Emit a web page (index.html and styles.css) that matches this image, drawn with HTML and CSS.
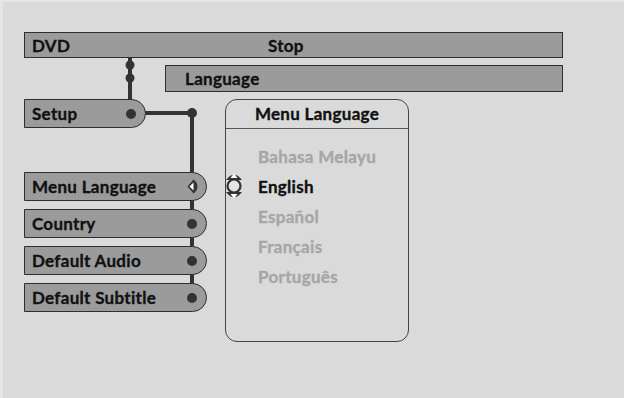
FILE: index.html
```html
<!DOCTYPE html>
<html lang="en">
<head>
  <meta charset="UTF-8" />
  <title>DVD Setup - Menu Language</title>
  <link rel="stylesheet" href="styles.css">
</head>
<body>

  <div class="screen">
    <!-- connector wires, drawn behind the menu pills -->
    <svg class="wires" width="624" height="398" viewBox="0 0 624 398">
      <g fill="#333" stroke="#333">
        <line x1="130" y1="58" x2="130" y2="100" stroke-width="4" />
        <circle cx="130" cy="65" r="4.5" stroke="none" />
        <circle cx="130" cy="78" r="4.5" stroke="none" />
        <line x1="145" y1="113" x2="192" y2="113" stroke-width="4" />
        <circle cx="192" cy="113" r="5" stroke="none" />
        <line x1="192" y1="113" x2="192" y2="300" stroke-width="4" />
      </g>
    </svg>

    <div class="bar bar-top">
      <span class="bar-label">DVD</span>
      <span>Stop</span>
    </div>
    <div class="bar bar-sub">Language</div>

    <div class="main">
      <div class="menu">
        <div class="pill pill-setup">Setup<i class="dot"></i></div>
        <div class="items">
          <div class="pill">Menu Language
            <svg class="arrow" width="11" height="15" viewBox="0 0 11 15">
              <path d="M0.5,7.5 L6.5,0.5 Q10.5,3.5 10.5,7.5 Q10.5,11.5 6.5,14.5 Z" fill="#333" />
              <path d="M2.5,7.5 L6.5,3.5 L6.5,11.5 Z" fill="#fff" />
            </svg>
          </div>
          <div class="pill">Country<i class="dot"></i></div>
          <div class="pill">Default Audio<i class="dot"></i></div>
          <div class="pill">Default Subtitle<i class="dot"></i></div>
        </div>
      </div>

      <div class="panel">
        <div class="panel-title">Menu Language</div>
        <ul class="options">
          <li>Bahasa Melayu</li>
          <li class="selected">
            <svg class="spinner" width="20" height="30" viewBox="0 0 20 30">
              <path d="M2,9 Q10,-1.5 18,9 Z" fill="#333" />
              <path d="M10,2.5 L6.5,7 L13.5,7 Z" fill="#fff" />
              <circle cx="10" cy="15" r="6.5" fill="#e4e4e4" stroke="#333" stroke-width="2.2" />
              <path d="M2,21 Q10,31.5 18,21 Z" fill="#333" />
              <path d="M10,27.5 L6.5,23 L13.5,23 Z" fill="#fff" />
            </svg>
            English
          </li>
          <li>Español</li>
          <li>Français</li>
          <li>Português</li>
        </ul>
      </div>
    </div>
  </div>

</body>
</html>
```

FILE: styles.css
```css
body {
  margin: 0;
  background: #dadada;
  font-family: 'Lato', 'Open Sans', sans-serif;
  font-weight: 700;
  font-size: 17px;
  color: #111;
  -webkit-text-stroke: 0.35px currentColor;
}

.screen {
  position: relative;
  width: 624px;
  height: 398px;
  box-sizing: border-box;
  padding: 30px 0 0 21px;
  border-left: 3px solid #e6e6e6;
  border-top: 2px solid #e6e6e6;
  background: #dadada;
  overflow: hidden;
}

.wires {
  position: absolute;
  left: -3px;
  top: -2px;
  z-index: 0;
}

.bar {
  position: relative;
  z-index: 1;
  display: flex;
  align-items: center;
  box-sizing: border-box;
  background: #9b9b9b;
  border: 1px solid #2e2e2e;
  letter-spacing: 0.3px;
}

.bar-top {
  width: 539px;
  height: 26px;
  padding-left: 7px;
}

.bar-label {
  width: 236px;
}

.bar-sub {
  width: 398px;
  height: 27px;
  margin: 7px 0 0 141px;
  padding-left: 19px;
}

.main {
  display: flex;
  gap: 18px;
  margin-top: 7px;
}

.menu {
  width: 183px;
}

.pill {
  position: relative;
  z-index: 1;
  display: flex;
  align-items: center;
  justify-content: space-between;
  box-sizing: border-box;
  height: 29px;
  padding: 0 9px 0 7px;
  background: #9b9b9b;
  border: 1px solid #2e2e2e;
  border-radius: 0 15px 15px 0;
  letter-spacing: 0.3px;
}

.pill-setup {
  width: 122px;
}

.dot {
  display: block;
  width: 10px;
  height: 10px;
  border-radius: 50%;
  background: #333;
}

.arrow {
  display: block;
  margin-right: -1px;
}

.items {
  display: flex;
  flex-direction: column;
  gap: 8px;
  margin-top: 44px;
}

.panel {
  position: relative;
  z-index: 1;
  width: 184px;
  height: 243px;
  box-sizing: border-box;
  border: 1.5px solid #444;
  border-radius: 12px;
}

.panel-title {
  height: 28px;
  line-height: 28px;
  text-align: center;
  border-bottom: 1px solid #555;
  letter-spacing: 0.3px;
}

.options {
  list-style: none;
  margin: 0;
  padding: 13px 0 0 32px;
}

.options li {
  position: relative;
  height: 30px;
  line-height: 30px;
  color: #a6a6a6;
  letter-spacing: 0.3px;
}

.options li.selected {
  color: #111;
}

.spinner {
  position: absolute;
  left: -34px;
  top: -1px;
}
```
